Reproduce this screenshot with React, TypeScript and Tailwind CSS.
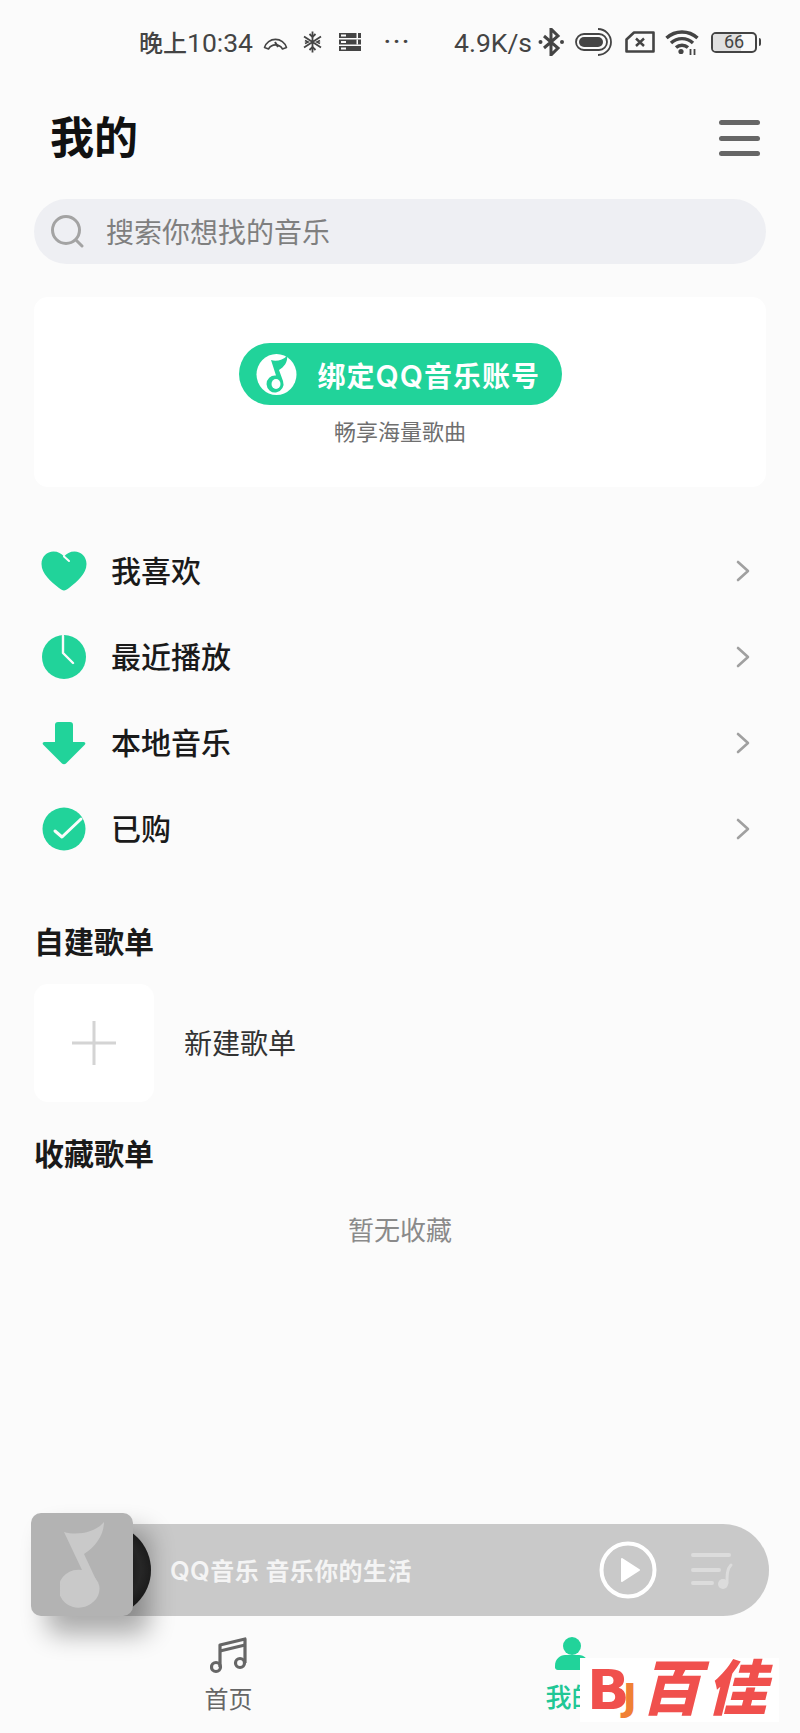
const FONT = "font-['Roboto','Noto_Sans_CJK_SC',sans-serif]";

function Gauge() {
  return (
    <svg width="25" height="17" viewBox="0 0 25 17" fill="none" stroke="#444" strokeWidth="1.6" className="shrink-0">
      <path d="M1.5 13.5 A11.5 11.5 0 0 1 23.5 13.5 L19.5 15 A8 8 0 0 0 5.5 15 Z" strokeLinejoin="round" />
      <path d="M12 8 L15 13" strokeWidth="2" />
    </svg>
  );
}

function Snow() {
  return (
    <svg width="21" height="22" viewBox="0 0 21 22" fill="none" stroke="#444" strokeWidth="1.8" className="shrink-0">
      <path d="M10.5 0.5V21.5M2 5.5L19 16.5M19 5.5L2 16.5" />
      <path d="M7.5 3L10.5 6L13.5 3M7.5 19L10.5 16L13.5 19M3 9.5L6 11L3 12.5M18 9.5L15 11L18 12.5" />
    </svg>
  );
}

function Server() {
  return (
    <svg width="22" height="18" viewBox="0 0 22 18" className="shrink-0">
      <rect x="0" y="0" width="22" height="5" fill="#444" />
      <rect x="0" y="6.5" width="22" height="5" fill="#444" />
      <rect x="0" y="13" width="22" height="5" fill="#444" />
      <rect x="2" y="1.5" width="5" height="2" fill="#fbfbfb" />
      <rect x="2" y="8" width="5" height="2" fill="#fbfbfb" />
      <rect x="2" y="14.5" width="5" height="2" fill="#fbfbfb" />
      <rect x="17.5" y="0" width="1.5" height="5" fill="#fbfbfb" />
      <rect x="17.5" y="6.5" width="1.5" height="5" fill="#fbfbfb" />
    </svg>
  );
}

function Bluetooth() {
  return (
    <svg width="27" height="28" viewBox="0 0 27 28" fill="none" stroke="#444" strokeWidth="3" className="shrink-0">
      <path d="M6 8L20 20L13 27V1L20 8L6 20" />
      <circle cx="2.5" cy="14" r="2" fill="#444" stroke="none" />
      <circle cx="24" cy="14" r="2" fill="#444" stroke="none" />
    </svg>
  );
}

function Pill() {
  return (
    <svg width="39" height="28" viewBox="0 0 39 28" fill="none" stroke="#444" className="shrink-0">
      <rect x="1" y="6" width="31" height="16" rx="8" strokeWidth="1.8" />
      <rect x="4" y="9" width="24" height="10" rx="5" fill="#444" stroke="none" />
      <path d="M23 1 A13 13 0 0 1 23 27" strokeWidth="1.8" />
    </svg>
  );
}

function Sim() {
  return (
    <svg width="30" height="22" viewBox="0 0 30 22" fill="none" stroke="#444" strokeWidth="2.6" className="shrink-0">
      <path d="M9 1.5H28.5V20.5H1.5V8.5Z" strokeLinejoin="round" />
      <path d="M11 7.5L19 15M19 7.5L11 15" strokeWidth="2.4" />
    </svg>
  );
}

function Wifi() {
  return (
    <svg width="35" height="25" viewBox="0 0 35 25" fill="none" stroke="#444" strokeWidth="3.4" className="shrink-0">
      <path d="M1.5 8 A23 23 0 0 1 32.5 8" />
      <path d="M6 13 A16 16 0 0 1 28 13" />
      <path d="M11 17.5 A9 9 0 0 1 23 17.5" />
      <circle cx="16" cy="21.5" r="2.6" fill="#444" stroke="none" />
      <path d="M25.5 19V25M29.5 19V25" strokeWidth="1.8" />
    </svg>
  );
}

function Battery() {
  return (
    <div className="flex items-center shrink-0">
      <div className="w-[46px] h-[21px] rounded-[5px] border-2 border-[#444] relative overflow-hidden flex items-center justify-center">
        <div className="absolute left-0 top-0 bottom-0 w-[28px] bg-[#e0e0e0]" />
        <span className="relative text-[18px] leading-none text-[#444]">66</span>
      </div>
      <div className="w-[2px] h-[8px] ml-[2px] bg-[#444] rounded-r" />
    </div>
  );
}

function QQNote({ color }: { color: string }) {
  return (
    <svg width="41" height="41" viewBox="0 0 41 41" className="shrink-0">
      <ellipse cx="20.5" cy="20.5" rx="20" ry="20.5" fill="#fff" />
      <path d="M15 6 C20 8 27 6 31 2 C32 8 28 13 23 16 L27 27 A8.5 8.5 0 1 1 20 21.5 Z" fill={color} />
      <ellipse cx="20" cy="30" rx="4.5" ry="5" fill="#fff" />
    </svg>
  );
}

function Heart() {
  return (
    <svg width="46" height="40" viewBox="0 0 46 40">
      <path d="M23 39.5 C21.5 39.5 20 38.5 18 37 C10 30.5 0.5 23 0.5 13 C0.5 5.5 6 0.5 12.5 0.5 C17 0.5 20.5 2.5 23 5.5 C25.5 2.5 29 0.5 33.5 0.5 C40 0.5 45.5 5.5 45.5 13 C45.5 23 36 30.5 28 37 C26 38.5 24.5 39.5 23 39.5 Z" fill="#21d39a" />
      <path d="M23 5.5 L28 10" stroke="#fbfbfb" strokeWidth="2" strokeLinecap="round" />
    </svg>
  );
}

function Clock() {
  return (
    <svg width="44" height="44" viewBox="0 0 44 44">
      <circle cx="22" cy="22" r="22" fill="#21d39a" />
      <path d="M21 1V18L31 28" fill="none" stroke="#fbfbfb" strokeWidth="2.4" strokeLinecap="round" strokeLinejoin="round" />
    </svg>
  );
}

function Down() {
  return (
    <svg width="44" height="43" viewBox="0 0 44 43">
      <path d="M13 3 A3 3 0 0 1 16 0 H28 A3 3 0 0 1 31 3 V20 H41 C43.5 20 44 21.5 42.5 23 L24 41.5 C23 42.5 21 42.5 20 41.5 L1.5 23 C0 21.5 0.5 20 3 20 H13 Z" fill="#21d39a" />
    </svg>
  );
}

function Check() {
  return (
    <svg width="44" height="44" viewBox="0 0 44 44">
      <circle cx="22" cy="22" r="21.5" fill="#21d39a" />
      <path d="M13 24L20 30L39 12" fill="none" stroke="#fbfbfb" strokeWidth="3" strokeLinecap="round" strokeLinejoin="round" />
    </svg>
  );
}

function Row({ label, icon }: { label: string; icon: React.ReactNode }) {
  return (
    <div className="h-[86px] flex items-center">
      <div className="w-[46px] ml-[41px] flex justify-center">{icon}</div>
      <span className="ml-[24px] mt-[1px] text-[30px] leading-none font-medium text-[#1a1a1a]">{label}</span>
      <svg width="14" height="22" viewBox="0 0 14 22" fill="none" stroke="#a0a0a0" strokeWidth="2.6" strokeLinecap="round" strokeLinejoin="round" className="ml-auto mr-[50px]">
        <path d="M2 2L12 11L2 20" />
      </svg>
    </div>
  );
}

export default function App() {
  return (
    <div className={`relative w-[800px] h-[1733px] overflow-hidden bg-[#fbfbfb] ${FONT}`}>
      {/* status bar */}
      <div className="h-[84px] flex items-center pl-[139px] text-[#444]">
        <span className="w-[120px] shrink-0 mt-[3px] text-[24px] leading-none font-medium whitespace-nowrap">
          晚上<span className="text-[26.5px] font-normal">10:34</span>
        </span>
        <div className="ml-[4px]"><Gauge /></div>
        <div className="ml-[14px]"><Snow /></div>
        <div className="ml-[16px]"><Server /></div>
        <span className="ml-[23px] w-[25px] text-[22px] leading-none tracking-[2.5px] font-bold">···</span>
        <span className="ml-[45px] w-[80px] shrink-0 mt-[3px] text-[26.5px] leading-none font-normal whitespace-nowrap">4.9K/s</span>
        <div className="ml-[4px]"><Bluetooth /></div>
        <div className="ml-[10px]"><Pill /></div>
        <div className="ml-[11px]"><Sim /></div>
        <div className="ml-[10px]"><Wifi /></div>
        <div className="ml-[11px]"><Battery /></div>
      </div>

      {/* header */}
      <div className="h-[108px] flex items-center justify-between pl-[50px] pr-[40px]">
        <h1 className="mt-[2px] text-[44px] leading-none font-bold text-[#111]">我的</h1>
        <div className="w-[41px] flex flex-col gap-[10.5px]">
          <div className="h-[5px] rounded-full bg-[#666]" />
          <div className="h-[5px] rounded-full bg-[#666]" />
          <div className="h-[5px] rounded-full bg-[#666]" />
        </div>
      </div>

      {/* search */}
      <div className="mt-[7px] mx-[34px] h-[65px] rounded-[33px] bg-[#eeeff3] flex items-center pl-[17px]">
        <svg width="33" height="33" viewBox="0 0 33 33" fill="none" stroke="#a3a3a3" strokeWidth="3" strokeLinecap="round">
          <circle cx="15" cy="15" r="13.5" />
          <path d="M25 25L31 31" />
        </svg>
        <span className="ml-[22px] mt-[4px] text-[28px] leading-none text-[#7f7f7f]">搜索你想找的音乐</span>
      </div>

      {/* bind card */}
      <div className="mt-[33px] mx-[34px] h-[190px] rounded-[14px] bg-white flex flex-col items-center pt-[46px]">
        <div className="w-[323px] h-[62px] rounded-[31px] bg-[#21d39a] flex items-center pl-[17px]">
          <QQNote color="#21d39a" />
          <span className="ml-[21px] mt-[4px] text-[28px] leading-none font-semibold tracking-[1px] text-white whitespace-nowrap">
            绑定<span className="font-['Inter'] text-[30px]">QQ</span>音乐账号
          </span>
        </div>
        <span className="mt-[14px] text-[22px] leading-[28px] text-[#6f6f6f]">畅享海量歌曲</span>
      </div>

      {/* list */}
      <div className="mt-[41px]">
        <Row label="我喜欢" icon={<Heart />} />
        <Row label="最近播放" icon={<Clock />} />
        <Row label="本地音乐" icon={<Down />} />
        <Row label="已购" icon={<Check />} />
      </div>

      {/* playlists */}
      <h2 className="mt-[51px] ml-[34px] text-[30px] leading-[40px] font-bold text-[#1a1a1a]">自建歌单</h2>
      <div className="mt-[21px] ml-[34px] flex items-center">
        <div className="w-[120px] h-[118px] rounded-[14px] bg-white flex items-center justify-center">
          <svg width="44" height="44" viewBox="0 0 44 44" stroke="#d4d4d4" strokeWidth="3">
            <path d="M22 0V44M0 22H44" />
          </svg>
        </div>
        <span className="ml-[30px] mt-[4px] text-[28px] leading-none text-[#333]">新建歌单</span>
      </div>
      <h2 className="mt-[33px] ml-[34px] text-[30px] leading-[40px] font-bold text-[#1a1a1a]">收藏歌单</h2>
      <p className="mt-[38px] text-center text-[26px] leading-[36px] text-[#8a8a8a]">暂无收藏</p>

      {/* player */}
      <div className="mt-[264px] ml-[31px] w-[738px] h-[103px] flex">
        <div className="relative z-10 w-[102px] h-[103px] shrink-0 rounded-[10px] bg-[#b3b3b3] flex items-center justify-center shadow-[16px_18px_26px_rgba(0,0,0,0.32)]">
          <svg width="44" height="86" viewBox="0 0 44 86">
            <path d="M4 10 C18 14 36 10 44 0 C44 14 34 26 24 32 L38 62 A20 19 0 1 1 22 48 Z" fill="#c9c9c9" />
            <ellipse cx="20" cy="67" rx="19.5" ry="17.5" fill="#c9c9c9" />
          </svg>
        </div>
        <div className="relative -ml-[72px] mt-[11px] flex-1 h-[92px] rounded-r-[46px] bg-[#c9c9c9] flex items-center">
          <div className="absolute -left-[2px] top-0 w-[92px] h-[92px] rounded-full bg-[radial-gradient(circle_at_50%_50%,#1a1a1a_0%,#333_55%,#111_85%,#0c0c0c_100%)]" />
          <span className="relative ml-[109px] mt-[2px] text-[24px] leading-none font-semibold tracking-[0.4px] text-[#f4f4f4] whitespace-nowrap">
            <span className="font-['Inter'] text-[25.5px]">QQ</span>音乐 音乐你的生活
          </span>
          <svg width="58" height="58" viewBox="0 0 58 58" fill="none" className="absolute left-[538px] top-[17px]">
            <circle cx="29" cy="29" r="26.5" stroke="#fff" strokeWidth="4" />
            <path d="M23 18 L40 29 L23 40 Z" fill="#fff" strokeLinejoin="round" stroke="#fff" strokeWidth="2" />
          </svg>
          <svg width="44" height="38" viewBox="0 0 44 38" fill="none" stroke="#dcdcdc" strokeWidth="4" strokeLinecap="round" className="absolute left-[630px] top-[29px]">
            <path d="M2 2H38M2 17H28M2 30H21" />
            <path d="M40 12C36 16 36 22 36 30" strokeWidth="3" />
            <circle cx="32" cy="31" r="5" fill="#dcdcdc" stroke="none" />
          </svg>
        </div>
      </div>

      {/* bottom nav */}
      <div className="mt-[21px] px-[57px] grid grid-cols-2">
        <div className="flex flex-col items-center">
          <svg width="38" height="37" viewBox="0 0 38 37" fill="none" stroke="#666" strokeWidth="3.2" strokeLinejoin="round">
            <path d="M10 30V8L35 2V26" />
            <path d="M10 14L35 8" />
            <circle cx="6" cy="30" r="4.5" />
            <circle cx="30" cy="26" r="4.5" />
          </svg>
          <span className="mt-[13px] text-[24px] leading-[26px] text-[#666]">首页</span>
        </div>
        <div className="flex flex-col items-center">
          <svg width="36" height="37" viewBox="0 0 36 37" fill="#21d39a">
            <circle cx="18" cy="9" r="9" />
            <path d="M1 29 C1 22 6 18 11 18 H25 C30 18 35 22 35 29 V31 A3 3 0 0 1 32 33 H4 A3 3 0 0 1 1 31 Z" />
          </svg>
          <span className="mt-[11px] text-[26px] leading-[26px] font-medium text-[#21c795] whitespace-nowrap">我的</span>
        </div>
      </div>

      {/* watermark */}
      <div className="absolute left-[580px] top-[1658px] w-[199px] h-[64px] bg-white flex items-center">
        <span className="ml-[7px] text-[56px] leading-none font-bold text-[#f0504d] font-['DejaVu_Sans']">B</span>
        <span className="-ml-[7px] mt-[14px] text-[38px] leading-none font-bold text-[#f08035] font-['DejaVu_Sans']">J</span>
        <span className="ml-[4px] text-[60px] leading-none font-black italic tracking-[6px] text-[#f0504d] whitespace-nowrap w-[138px] overflow-visible">百佳</span>
      </div>
    </div>
  );
}
